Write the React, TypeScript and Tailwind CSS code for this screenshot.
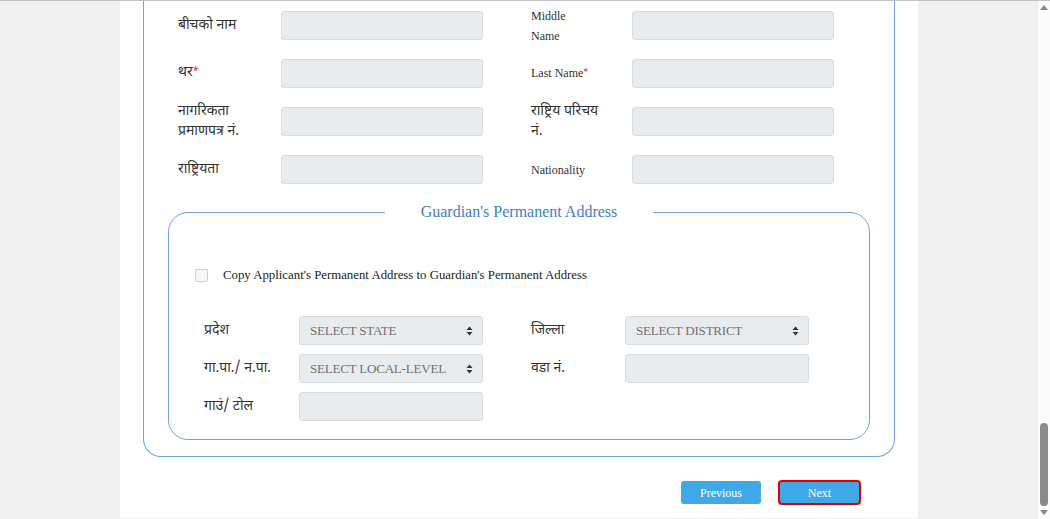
import React from 'react'

const dev = "font-['Noto_Sans_Devanagari','Lohit_Devanagari','Mukta','Noto_Sans',sans-serif]"
const serif = "font-['Liberation_Serif','Times_New_Roman',serif]"

function Input({ w = 'w-[202px]' }: { w?: string }) {
  return <div className={`${w} h-[29px] bg-[#e9ecef] border border-[#d9dcdf] rounded-[3px] shrink-0`} />
}

function Select({ text }: { text: string }) {
  return (
    <div className="w-[184px] h-[29px] bg-[#e9ecef] border border-[#d9dcdf] rounded-[3px] shrink-0 flex items-center justify-between pl-[10px] pr-[9px]">
      <span className={`${serif} text-[13px] text-[#707070] tracking-[-0.2px]`}>{text}</span>
      <svg width="7" height="10" viewBox="0 0 7 10">
        <path d="M3.5 0.5 L6.5 4 L0.5 4 Z" fill="#333" />
        <path d="M3.5 9.5 L6.5 6 L0.5 6 Z" fill="#333" />
      </svg>
    </div>
  )
}

function Req() {
  return <span className="text-[#e0202a] text-[10px] relative top-[-2px]">*</span>
}

function TopRow({
  left,
  right,
  rightSerif,
}: {
  left: React.ReactNode
  right: React.ReactNode
  rightSerif?: boolean
}) {
  return (
    <div className="flex items-center h-[29px]">
      <div className={`w-[103px] ${dev} text-[14px] leading-[20px] text-[#333]`}>{left}</div>
      <Input />
      <div
        className={`w-[101px] ml-[48px] ${
          rightSerif ? `${serif} text-[12px] leading-[20px]` : `${dev} text-[14px] leading-[20px]`
        } text-[#333]`}
      >
        {right}
      </div>
      <Input />
    </div>
  )
}

export default function App() {
  return (
    <div className="h-[519px] w-full flex bg-[#f0f0f0] border-t border-[#c4c4c4] overflow-hidden">
      <div className="flex-1">
        <div className="mx-auto w-[798px] h-[517px] bg-white px-[23px]">
          <div className="border border-t-0 border-[#6ea4d8] rounded-b-[18px] px-[24px] pt-[10px] pb-[16px]">
            <div className="pl-[10px] flex flex-col gap-[19px]">
              <TopRow
                left="बीचको नाम"
                right={
                  <>
                    Middle
                    <br />
                    Name
                  </>
                }
                rightSerif
              />
              <TopRow
                left={
                  <>
                    थर<Req />
                  </>
                }
                right={
                  <>
                    Last Name<Req />
                  </>
                }
                rightSerif
              />
              <TopRow
                left={
                  <>
                    नागरिकता
                    <br />
                    प्रमाणपत्र नं.
                  </>
                }
                right={
                  <>
                    राष्ट्रिय परिचय
                    <br />
                    नं.
                  </>
                }
              />
              <TopRow left="राष्ट्रियता" right="Nationality" rightSerif />
            </div>

            <fieldset className="mt-[17px] border border-[#6ea4d8] rounded-[20px] pb-[18px]">
              <legend className={`mx-auto px-[36px] ${serif} text-[16px] leading-[22px] text-[#3f7fc0]`}>
                Guardian's Permanent Address
              </legend>

              <div className="flex items-center pl-[26px] mt-[44px]">
                <div className="w-[13px] h-[13px] border border-[#cfcfcf] rounded-[2px] bg-[#f7f7f7]" />
                <span className={`ml-[15px] ${serif} text-[12.8px] leading-[16px] text-[#222]`}>
                  Copy Applicant's Permanent Address to Guardian's Permanent Address
                </span>
              </div>

              <div className="mt-[33px] pl-[35px] flex flex-col gap-[9px]">
                <div className="flex items-center">
                  <div className={`w-[95px] ${dev} text-[14px] text-[#333]`}>प्रदेश</div>
                  <Select text="SELECT STATE" />
                  <div className={`w-[94px] ml-[48px] ${dev} text-[14px] text-[#333]`}>जिल्ला</div>
                  <Select text="SELECT DISTRICT" />
                </div>
                <div className="flex items-center">
                  <div className={`w-[95px] ${dev} text-[14px] text-[#333]`}>गा.पा./ न.पा.</div>
                  <Select text="SELECT LOCAL-LEVEL" />
                  <div className={`w-[94px] ml-[48px] ${dev} text-[14px] text-[#333]`}>वडा नं.</div>
                  <Input w="w-[184px]" />
                </div>
                <div className="flex items-center">
                  <div className={`w-[95px] ${dev} text-[14px] text-[#333]`}>गाउं/ टोल</div>
                  <Input w="w-[184px]" />
                </div>
              </div>
            </fieldset>
          </div>

          <div className="flex justify-end items-center mt-[23px] mr-[34px] gap-[17px]">
            <button
              className={`w-[80px] h-[23px] bg-[#3fa9e8] rounded-[3px] text-white ${serif} text-[12px]`}
            >
              Previous
            </button>
            <button
              className={`w-[83px] h-[25px] bg-[#3fa9e8] border-2 border-[#e00000] rounded-[4px] text-white ${serif} text-[12px]`}
            >
              Next
            </button>
          </div>
        </div>
      </div>

      <div className="w-[12px] h-full bg-[#fbfbfb] flex flex-col items-center justify-between py-[4px]">
        <svg width="8" height="5" viewBox="0 0 8 5">
          <path d="M4 0 L8 5 L0 5 Z" fill="#8a8a8a" />
        </svg>
        <div className="flex-1 flex flex-col justify-end w-full items-center pb-[4px]">
          <div className="w-[8px] h-[83px] rounded-[4px] bg-[#8a8a8a]" />
        </div>
        <svg width="8" height="5" viewBox="0 0 8 5">
          <path d="M0 0 L8 0 L4 5 Z" fill="#8a8a8a" />
        </svg>
      </div>
    </div>
  )
}
